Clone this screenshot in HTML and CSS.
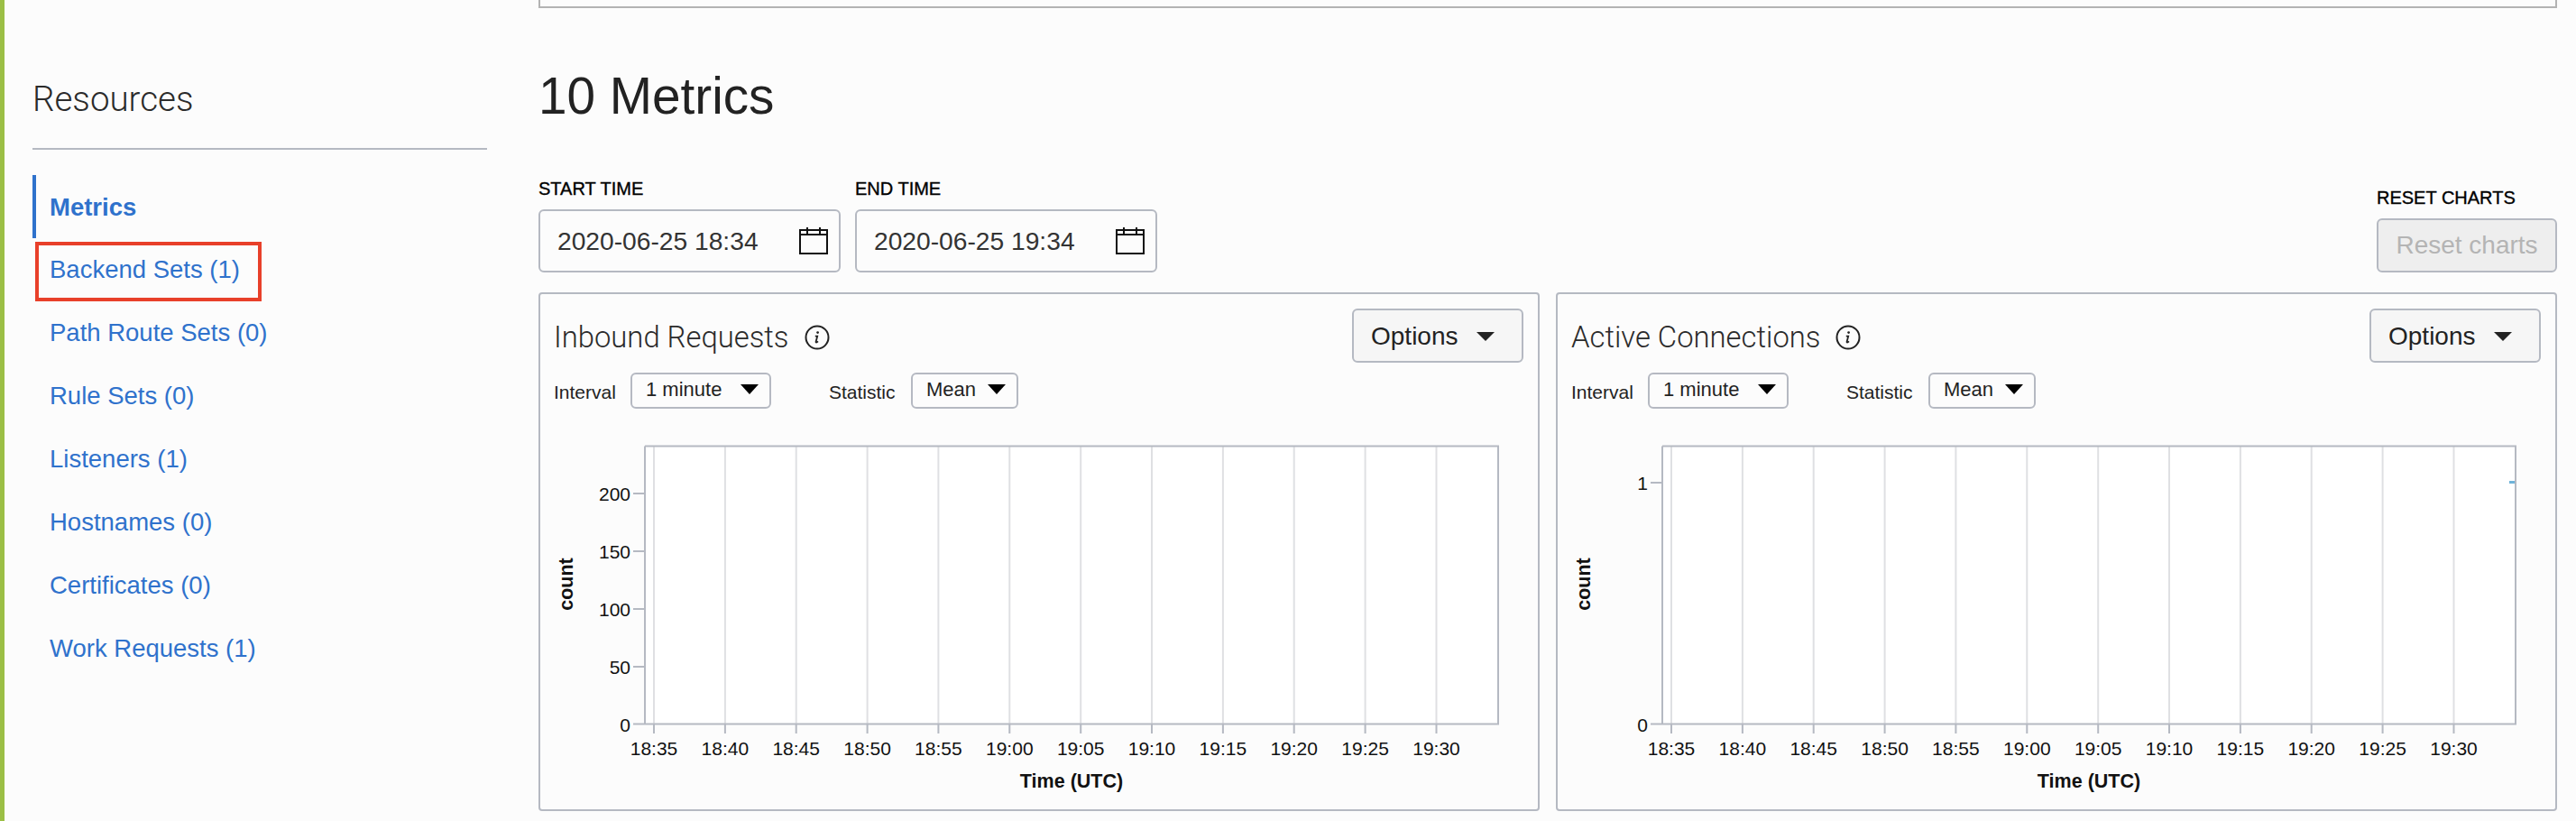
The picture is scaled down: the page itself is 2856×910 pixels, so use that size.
FILE: index.html
```html
<!DOCTYPE html>
<html lang="en">
<head>
<meta charset="utf-8">
<title>Metrics</title>
<link rel="stylesheet" href="styles.css">
</head>
<body>
<div class="page">
  <aside class="sidebar">
    <h2 class="res-title">Resources</h2>
    <nav class="res-nav">
      <a class="res-link active">Metrics</a>
      <a class="res-link callout">Backend Sets (1)</a>
      <a class="res-link">Path Route Sets (0)</a>
      <a class="res-link">Rule Sets (0)</a>
      <a class="res-link">Listeners (1)</a>
      <a class="res-link">Hostnames (0)</a>
      <a class="res-link">Certificates (0)</a>
      <a class="res-link">Work Requests (1)</a>
    </nav>
  </aside>
  <main class="content">
    <div class="top-box"></div>
    <h1 class="heading">10 Metrics</h1>
    <div class="filters">
      <div class="field">
        <label class="field-label">START TIME</label>
        <div class="date-input"><span>2020-06-25 18:34</span>
          <svg class="cal" width="32" height="30" viewBox="0 0 32 30"><path d="M1 3h30v26H1zM1 8h30M9 0v8M23 0v8"/></svg>
        </div>
      </div>
      <div class="field">
        <label class="field-label">END TIME</label>
        <div class="date-input"><span>2020-06-25 19:34</span>
          <svg class="cal" width="32" height="30" viewBox="0 0 32 30"><path d="M1 3h30v26H1zM1 8h30M9 0v8M23 0v8"/></svg>
        </div>
      </div>
      <div class="field field-end">
        <label class="field-label">RESET CHARTS</label>
        <button class="reset-btn" disabled>Reset charts</button>
      </div>
    </div>
    <div class="cards">
      <section class="card">
        <header class="card-head">
          <div class="card-title"><span>Inbound Requests</span>
            <svg class="info" width="28" height="28" viewBox="0 0 28 28"><circle cx="14" cy="14" r="12.5"/><circle class="dot" cx="14.6" cy="8.6" r="1.4"/><path d="M11.8 12.6h2.4l-1.6 6.2c-.2.9.6 1.1 2.4-.4"/></svg>
          </div>
          <button class="options">Options<svg width="20" height="10" viewBox="0 0 20 10"><path d="M0 0h20L10 10z"/></svg></button>
        </header>
        <div class="controls">
          <span class="ctl-label">Interval</span>
          <div class="select sel-interval"><span>1 minute</span><svg width="20" height="11" viewBox="0 0 20 11"><path d="M0 0h20L10 11z"/></svg></div>
          <span class="ctl-label ctl-second">Statistic</span>
          <div class="select sel-stat"><span>Mean</span><svg width="20" height="11" viewBox="0 0 20 11"><path d="M0 0h20L10 11z"/></svg></div>
        </div>
        <svg class="chart" width="1076" height="420" viewBox="0 0 1076 420">
          <rect class="plot" x="101" y="21.5" width="946" height="308"/>
          <path class="grid" d="M111 22V330M189.9 22V330M268.7 22V330M347.6 22V330M426.4 22V330M505.3 22V330M584.2 22V330M663 22V330M741.9 22V330M820.7 22V330M899.6 22V330M978.5 22V330"/>
          <path class="axis" d="M101 21.5H1047V329.5H88M101 21.5V329.5M111 330V340M189.9 330V340M268.7 330V340M347.6 330V340M426.4 330V340M505.3 330V340M584.2 330V340M663 330V340M741.9 330V340M820.7 330V340M899.6 330V340M978.5 330V340M88 74H101M88 138H101M88 202H101M88 266H101"/>
          <g class="ylab">
            <text x="85" y="81.500">200</text><text x="85" y="145.500">150</text><text x="85" y="209.500">100</text><text x="85" y="273.500">50</text><text x="85" y="337.500">0</text>
          </g>
          <g class="xlab">
            <text x="111" y="364">18:35</text><text x="189.900" y="364">18:40</text><text x="268.700" y="364">18:45</text><text x="347.600" y="364">18:50</text><text x="426.400" y="364">18:55</text><text x="505.300" y="364">19:00</text><text x="584.200" y="364">19:05</text><text x="663" y="364">19:10</text><text x="741.900" y="364">19:15</text><text x="820.700" y="364">19:20</text><text x="899.600" y="364">19:25</text><text x="978.500" y="364">19:30</text>
          </g>
          <text class="axt" x="574" y="400">Time (UTC)</text>
          <text class="axt" transform="rotate(-90 21 174.500)" x="21" y="174.500">count</text>
        </svg>
      </section>
      <section class="card">
        <header class="card-head">
          <div class="card-title"><span>Active Connections</span>
            <svg class="info" width="28" height="28" viewBox="0 0 28 28"><circle cx="14" cy="14" r="12.5"/><circle class="dot" cx="14.6" cy="8.6" r="1.4"/><path d="M11.8 12.6h2.4l-1.6 6.2c-.2.9.6 1.1 2.4-.4"/></svg>
          </div>
          <button class="options">Options<svg width="20" height="10" viewBox="0 0 20 10"><path d="M0 0h20L10 10z"/></svg></button>
        </header>
        <div class="controls">
          <span class="ctl-label">Interval</span>
          <div class="select sel-interval"><span>1 minute</span><svg width="20" height="11" viewBox="0 0 20 11"><path d="M0 0h20L10 11z"/></svg></div>
          <span class="ctl-label ctl-second">Statistic</span>
          <div class="select sel-stat"><span>Mean</span><svg width="20" height="11" viewBox="0 0 20 11"><path d="M0 0h20L10 11z"/></svg></div>
        </div>
        <svg class="chart" width="1076" height="420" viewBox="0 0 1076 420">
          <rect class="plot" x="101" y="21.5" width="946" height="308"/>
          <path class="grid" d="M111 22V330M189.9 22V330M268.7 22V330M347.6 22V330M426.4 22V330M505.3 22V330M584.2 22V330M663 22V330M741.9 22V330M820.7 22V330M899.6 22V330M978.5 22V330"/>
          <path class="axis" d="M101 21.5H1047V329.5H88M101 21.5V329.5M111 330V340M189.9 330V340M268.7 330V340M347.6 330V340M426.4 330V340M505.3 330V340M584.2 330V340M663 330V340M741.9 330V340M820.7 330V340M899.6 330V340M978.5 330V340M88 62H101"/>
          <rect class="mark" x="1040" y="60" width="6" height="3"/>
          <g class="ylab">
            <text x="85" y="69.500">1</text><text x="85" y="337.500">0</text>
          </g>
          <g class="xlab">
            <text x="111" y="364">18:35</text><text x="189.900" y="364">18:40</text><text x="268.700" y="364">18:45</text><text x="347.600" y="364">18:50</text><text x="426.400" y="364">18:55</text><text x="505.300" y="364">19:00</text><text x="584.200" y="364">19:05</text><text x="663" y="364">19:10</text><text x="741.900" y="364">19:15</text><text x="820.700" y="364">19:20</text><text x="899.600" y="364">19:25</text><text x="978.500" y="364">19:30</text>
          </g>
          <text class="axt" x="574" y="400">Time (UTC)</text>
          <text class="axt" transform="rotate(-90 21 174.500)" x="21" y="174.500">count</text>
        </svg>
      </section>
    </div>
  </main>
</div>
</body>
</html>
```
FILE: styles.css
```css
* { box-sizing: border-box; }
html, body { margin: 0; height: 910px; overflow: hidden; background: #fcfcfc; }
body { font-family: "Liberation Sans", Arial, sans-serif; color: #222; }

.page { display: flex; height: 910px; border-left: 5px solid #9bbf45; }

.sidebar { width: 504px; margin: 0 57px 0 31px; flex: none; }
.res-title {
  margin: 0; padding: 88px 0 20px; height: 166px;
  font: 300 38.500px/44px Roboto, "Liberation Sans", sans-serif;
  color: #2b2b2b;
  border-bottom: 2px solid #b5b9c2;
}
.res-nav { display: flex; flex-direction: column; margin-top: 28px; }
.res-link {
  position: relative; display: flex; align-items: center;
  height: 70px; padding-left: 19px;
  font-size: 27.500px; color: #2f72cc;
}
.res-link.active { border-left: 4px solid #2f72cc; padding: 2px 0 0 15px; font-weight: bold; }
.callout::after {
  content: ""; position: absolute; box-sizing: border-box;
  left: 3px; top: 4px; width: 251px; height: 66px;
  border: 4px solid #e8402a;
}

.content { width: 2238px; flex: none; }
.top-box { height: 9px; border: 2px solid #b3b3b3; border-top: 0; }
.heading { margin: 68px 0 0; font: normal 56.700px/60px "Liberation Sans", Arial, sans-serif; color: #222; }

.filters { display: flex; align-items: flex-end; gap: 16px; margin-top: 60px; }
.field-end { margin-left: auto; }
.field-label {
  display: block; margin-bottom: 11px;
  font-size: 20px; line-height: 24px; color: #000;
  -webkit-text-stroke: .35px #000;
}
.date-input {
  display: flex; align-items: center; justify-content: space-between;
  width: 335px; height: 70px; padding: 0 12px 0 19px;
  border: 2px solid #b5b9c2; border-radius: 6px;
  font-size: 28.200px; color: #333;
}
.cal { display: block; margin-top: -1px; }
.cal path { fill: none; stroke: #111; stroke-width: 2; }

.reset-btn {
  display: block; width: 200px; height: 60px; padding: 0;
  border: 2px solid #b5b9c2; border-radius: 6px; background: #eee;
  font: 28px "Liberation Sans", Arial, sans-serif; color: #b4b4b4;
}

.cards { display: flex; gap: 18px; margin-top: 22px; }
.card {
  width: 1110px; height: 575px; padding: 16px 16px 0 15px;
  border: 2px solid #b5b9c2; border-radius: 4px;
}
.card-head { display: flex; align-items: center; justify-content: space-between; height: 60px; }
.card-title { display: flex; align-items: center; gap: 17px; padding-top: 3px; font: 300 32.800px/40px Roboto, "Liberation Sans", sans-serif; color: #2b2b2b; }
.info { display: block; }
.info circle, .info path { fill: none; stroke: #222; stroke-width: 2; }
.info path { stroke-width: 1.800; }
.info .dot { fill: #222; stroke: none; }

.options {
  display: flex; align-items: center; justify-content: space-between;
  width: 190px; height: 60px; padding: 2px 30px 0 19px;
  border: 2px solid #b5b9c2; border-radius: 6px; background: #f6f6f6;
  font: 28px "Liberation Sans", Arial, sans-serif; color: #222;
}
.options svg { display: block; fill: #222; }

.controls { display: flex; align-items: flex-end; margin-top: 11px; height: 40px; }
.ctl-label { font-size: 21px; line-height: 24px; margin-bottom: 6px; color: #222; width: 85px; }
.ctl-second { width: 91px; margin-left: 64px; }
.select {
  display: flex; align-items: center; justify-content: space-between;
  height: 40px; padding: 0 12px 2px 15px;
  border: 2px solid #b5b9c2; border-radius: 6px;
  font-size: 22px; color: #222;
}
.select svg { display: block; fill: #000; margin-top: -2px; }
.sel-interval { width: 156px; }
.sel-stat { width: 119px; }

.chart { display: block; margin-top: 20px; }
.plot { fill: #fff; }
.grid { fill: none; stroke: #dfe0e3; stroke-width: 2; }
.axis { fill: none; stroke: #b5b9c2; stroke-width: 2; }
.mark { fill: #6fb3d9; }
.ylab text { font-size: 21px; text-anchor: end; fill: #111; }
.xlab text { font-size: 21px; text-anchor: middle; fill: #111; }
.axt { font-size: 21.500px; font-weight: bold; text-anchor: middle; fill: #111; }
```
